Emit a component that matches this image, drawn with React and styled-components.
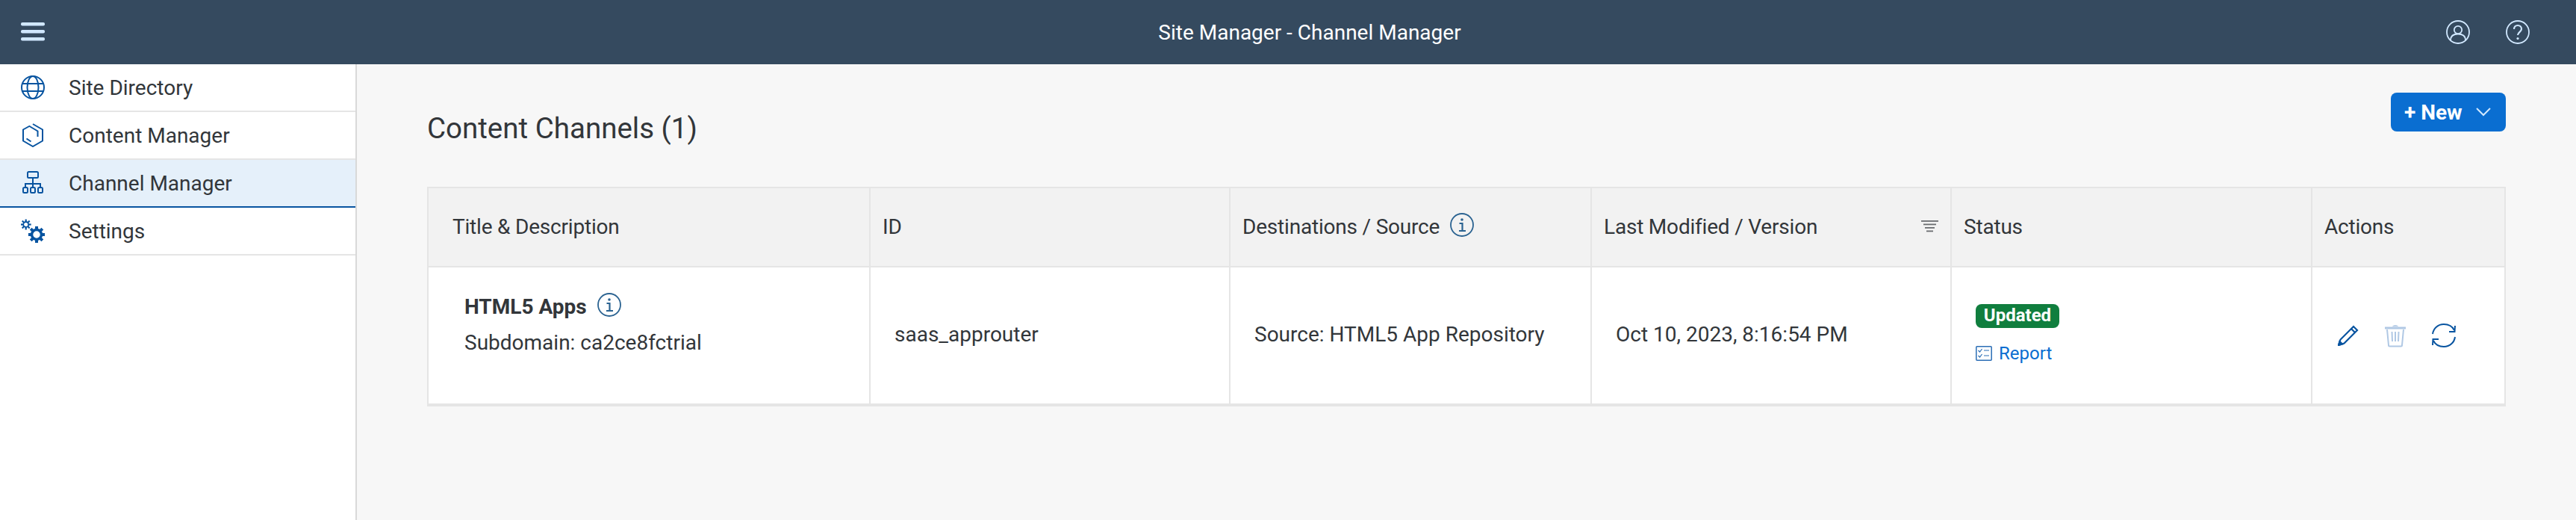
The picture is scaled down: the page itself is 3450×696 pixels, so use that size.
import React from "react";
import styled, { createGlobalStyle } from "styled-components";

const Global = createGlobalStyle`
  html, body { margin: 0; padding: 0; height: 696px; overflow: hidden; background: #f7f7f7; }
  body { font-family: Roboto, "Liberation Sans", sans-serif; color: #32363a; }
  #root { height: 696px; }
`;
const Shell = styled.div`display: flex; flex-direction: column; height: 696px;`;
const TopBar = styled.header`
  display: grid; grid-template-columns: 232px 1fr 174px; align-items: center;
  height: 86px; flex: none; background: #354a5f; color: #fff; font-size: 28px;
`;
const MenuButton = styled.div`display: flex; padding-left: 28px;`;
const Title = styled.div`text-align: center;`;
const TopActions = styled.div`display: flex; gap: 48px; padding-right: 62px; justify-content: flex-end;`;
const Body = styled.div`display: flex; flex: 1; min-height: 0;`;
const Side = styled.nav`width: 476px; flex: none; background: #fff; border-right: 2px solid #d9d9d9;`;
const NavItem = styled.div`
  display: flex; align-items: center; gap: 32px; height: 62px; padding-left: 28px;
  border-bottom: 2px solid ${p => (p.$active ? "#0854a0" : "#e5e5e5")};
  background: ${p => (p.$active ? "#e5f0fa" : "#fff")};
  font-size: 28px; color: #32363a;
`;
const Main = styled.main`flex: 1; padding: 38px 94px 0 94px; min-width: 0;`;
const TitleRow = styled.div`display: flex; justify-content: space-between; height: 126px;`;
const Heading = styled.h1`margin: 24px 0 0; font-size: 38.5px; font-weight: 400; line-height: 48px; color: #32363a;`;
const NewButton = styled.div`
  display: flex; align-items: center; gap: 18px; box-sizing: border-box; width: 154px; height: 52px; padding-left: 18px;
  background: #0a6ed1; border-radius: 8px; color: #fff; font-size: 28px; font-weight: 700;
`;
const Table = styled.div`
  display: grid; grid-template-columns: 592px 482px 484px 482px 483px 259px;
  border: solid #e5e5e5; border-width: 2px 0 4px 2px;
`;
const Head = styled.div`
  display: flex; align-items: center; gap: 14px; box-sizing: border-box; height: 106px;
  padding: 0 16px 2px ${p => (p.$first ? "32px" : "16px")}; background: #f2f2f2; font-size: 28px; letter-spacing: -0.2px; color: #32363a;
  border-bottom: 2px solid #e5e5e5; border-right: 2px solid #e5e5e5;
`;
const Cell = styled.div`
  display: flex; flex-direction: column; justify-content: ${p => (p.$top ? "flex-start" : "center")};
  box-sizing: border-box; height: 182px; padding: ${p => (p.$top ? "30px 16px 0 48px" : p.$raised ? "0 16px 4px 32px" : "0 16px 0 32px")};
  background: #fff; font-size: 28px; color: #32363a; border-right: 2px solid #e5e5e5;
`;
const CellText = styled.span`position: relative; top: -2px;`;
const Name = styled.div`display: flex; align-items: center; gap: 14px; height: 44px; font-weight: 700;`;
const Sub = styled.div`margin-top: 10px;`;
const SortSlot = styled.span`margin-left: auto; display: flex;`;
const Badge = styled.span`
  align-self: flex-start; display: inline-block; box-sizing: border-box; width: 112px; text-align: center; height: 32px; line-height: 31px; border-radius: 8px;
  background: #107e3e; color: #fff; font-size: 24px; font-weight: 700;
`;
const Report = styled.div`display: flex; align-items: center; gap: 9px; margin-top: 20px; color: #0a6ed1; font-size: 24px;`;
const Actions = styled.div`display: flex; align-items: center; gap: 35px; padding-left: 2px;`;

const Hamburger = () => (
  <svg width="32" height="26" viewBox="0 0 32 26" fill="#d1e8ff"><rect y="0" width="32" height="4.4" rx="2" /><rect y="10" width="32" height="4.4" rx="2" /><rect y="20" width="32" height="4.4" rx="2" /></svg>
);
const User = () => (
  <svg width="32" height="32" viewBox="0 0 32 32" fill="none" stroke="#d1e8ff" strokeWidth="1.8"><circle cx="16" cy="16" r="15" /><circle cx="16" cy="13" r="5.2" /><path d="M6 27c0-6 4-8.500 10-8.500s10 2.500 10 8.500" /></svg>
);
const Help = () => (
  <svg width="32" height="32" viewBox="0 0 32 32" fill="none" stroke="#d1e8ff" strokeWidth="1.8"><circle cx="16" cy="16" r="15" /><path d="M11 12c0-3 2.200-5 5-5s5 2 5 4.800c0 4-5 4-5 8.200" strokeWidth="2.200" /><circle cx="16" cy="24.500" r="1.600" fill="#d1e8ff" stroke="none" /></svg>
);
const Globe = () => (
  <svg width="32" height="32" viewBox="0 0 32 32" fill="none" stroke="#0854a0" strokeWidth="2"><circle cx="16" cy="16" r="15" /><ellipse cx="16" cy="16" rx="7.500" ry="15" /><path d="M2 11h28M2 21h28" /></svg>
);
const Hex = () => (
  <svg width="32" height="32" viewBox="0 0 32 32" fill="none" stroke="#0854a0" strokeWidth="2"><path d="M16 1l13 7.500v15L16 31 3 23.500v-15L12 3.500" /><path d="M11.500 4l11 6.500V18" /><path d="M7.500 20.500l6 4" /></svg>
);
const Sitemap = () => (
  <svg width="32" height="32" viewBox="0 0 32 32" fill="none" stroke="#0854a0" strokeWidth="2"><rect x="9" y="1" width="14" height="8" rx="1.500" /><path d="M16 9v8M6 22v-5h20v5M16 17v5" /><rect x="3" y="22" width="6" height="7" rx="1.500" /><rect x="13" y="22" width="6" height="7" rx="1.500" /><rect x="23" y="22" width="6" height="7" rx="1.500" /></svg>
);
const gear = (cx, cy, r, tooth, w) => {
  const t = [];
  for (let i = 0; i < 8; i++) t.push(<rect key={i} x={cx - tooth / 2} y={cy - r - w * 0.9} width={tooth} height={w} transform={`rotate(${i * 45} ${cx} ${cy})`} />);
  return t;
};
const Gears = () => (
  <svg width="32" height="32" viewBox="0 0 32 32" fill="#0854a0"><circle cx="21" cy="21" r="6.500" fill="none" stroke="#0854a0" strokeWidth="3.500" />{gear(21, 21, 7, 4, 4.500)}<circle cx="6.700" cy="7.500" r="3.500" fill="none" stroke="#0854a0" strokeWidth="1.800" />{gear(6.700, 7.500, 4, 2.200, 3.300)}</svg>
);
const Chevron = () => (
  <svg width="20" height="12" viewBox="0 0 20 12" fill="none" stroke="#d1e8ff" strokeWidth="2"><path d="M1 1l9 9 9-9" /></svg>
);
const Info = () => (
  <svg width="32" height="32" viewBox="0 0 32 32" fill="none" stroke="#2b6391" strokeWidth="1.800"><circle cx="16" cy="16" r="15" /><circle cx="16" cy="9" r="1.800" fill="#2b6391" stroke="none" /><path d="M12.500 14H16.500V23M12 24h9" strokeWidth="2.200" /></svg>
);
const InfoRaised = styled.span`display: flex; margin-top: -4px;`;
const SortLines = () => (
  <svg width="23" height="16" viewBox="0 0 23 16" fill="#6a6d70"><rect y="0" width="23" height="1.800" /><rect x="3" y="4.500" width="17" height="1.800" /><rect x="5" y="9" width="13" height="1.800" /><rect x="7" y="13.500" width="9" height="1.800" /></svg>
);
const Checklist = () => (
  <svg width="22" height="20" viewBox="0 0 22 20" fill="none" stroke="#2b6eb5" strokeWidth="1.200"><rect x="0.800" y="0.800" width="20.400" height="18.400" rx="1" strokeWidth="1.500" /><path d="M3.500 6l2 2 3-4M3.500 13l2 2 3-4M11 6h7M11 13h7" /></svg>
);
const Pencil = () => (
  <svg width="28" height="28" viewBox="0 0 28 28" fill="none" stroke="#0854a0" strokeWidth="2.200"><path d="M1 27l2.500-7.500L21 2l5 5L8.500 24.500z" /><path d="M18 5l5 5" /><path d="M1 27l1.500-5 3.500 3.500z" fill="#0854a0" /></svg>
);
const Trash = () => (
  <svg width="28" height="32" viewBox="0 0 28 32" fill="none" stroke="#b0c8e4" strokeWidth="2"><path d="M0 6h28" strokeWidth="3" /><path d="M10 4c1-2.500 7-2.500 8 0z" fill="#b0c8e4" stroke="none" /><path d="M3 8l2 21c0 1 .7 1.500 1.500 1.500h15c.8 0 1.500-.5 1.500-1.500l2-21" /><path d="M9.500 11l.5 13M14 11v13M18.500 11l-.5 13" /></svg>
);
const Sync = () => (
  <svg width="32" height="32" viewBox="0 0 32 32" fill="none" stroke="#0854a0" strokeWidth="2"><path d="M1 14C2 6.500 8 1 16 1s12 4 14 8" /><path d="M31 18c-1 7.500-7 13-15 13S4 27 2 23" /><path d="M23 11l7.500 0L31 3" /><path d="M9 21l-7.500 0L1 29" /></svg>
);

const navItems = [
  ["Site Directory", <Globe key="g" />],
  ["Content Manager", <Hex key="h" />],
  ["Channel Manager", <Sitemap key="s" />, true],
  ["Settings", <Gears key="t" />],
];

export default function App() {
  return (
    <Shell>
      <Global />
      <TopBar>
        <MenuButton><Hamburger /></MenuButton>
        <Title>Site Manager - Channel Manager</Title>
        <TopActions><User /><Help /></TopActions>
      </TopBar>
      <Body>
        <Side>
          {navItems.map(([label, icon, active]) => (
            <NavItem key={label} $active={active}>{icon}<span>{label}</span></NavItem>
          ))}
        </Side>
        <Main>
          <TitleRow>
            <Heading>Content Channels (1)</Heading>
            <NewButton><span>+ New</span><Chevron /></NewButton>
          </TitleRow>
          <Table>
            <Head $first>Title &amp; Description</Head>
            <Head>ID</Head>
            <Head>Destinations / Source <InfoRaised><Info /></InfoRaised></Head>
            <Head>Last Modified / Version<SortSlot><SortLines /></SortSlot></Head>
            <Head>Status</Head>
            <Head>Actions</Head>
            <Cell $top>
              <Name>HTML5 Apps <InfoRaised><Info /></InfoRaised></Name>
              <Sub>Subdomain: ca2ce8fctrial</Sub>
            </Cell>
            <Cell><CellText>saas_approuter</CellText></Cell>
            <Cell><CellText>Source: HTML5 App Repository</CellText></Cell>
            <Cell><CellText>Oct 10, 2023, 8:16:54 PM</CellText></Cell>
            <Cell $raised>
              <Badge>Updated</Badge>
              <Report><Checklist />Report</Report>
            </Cell>
            <Cell>
              <Actions><Pencil /><Trash /><Sync /></Actions>
            </Cell>
          </Table>
        </Main>
      </Body>
    </Shell>
  );
}
